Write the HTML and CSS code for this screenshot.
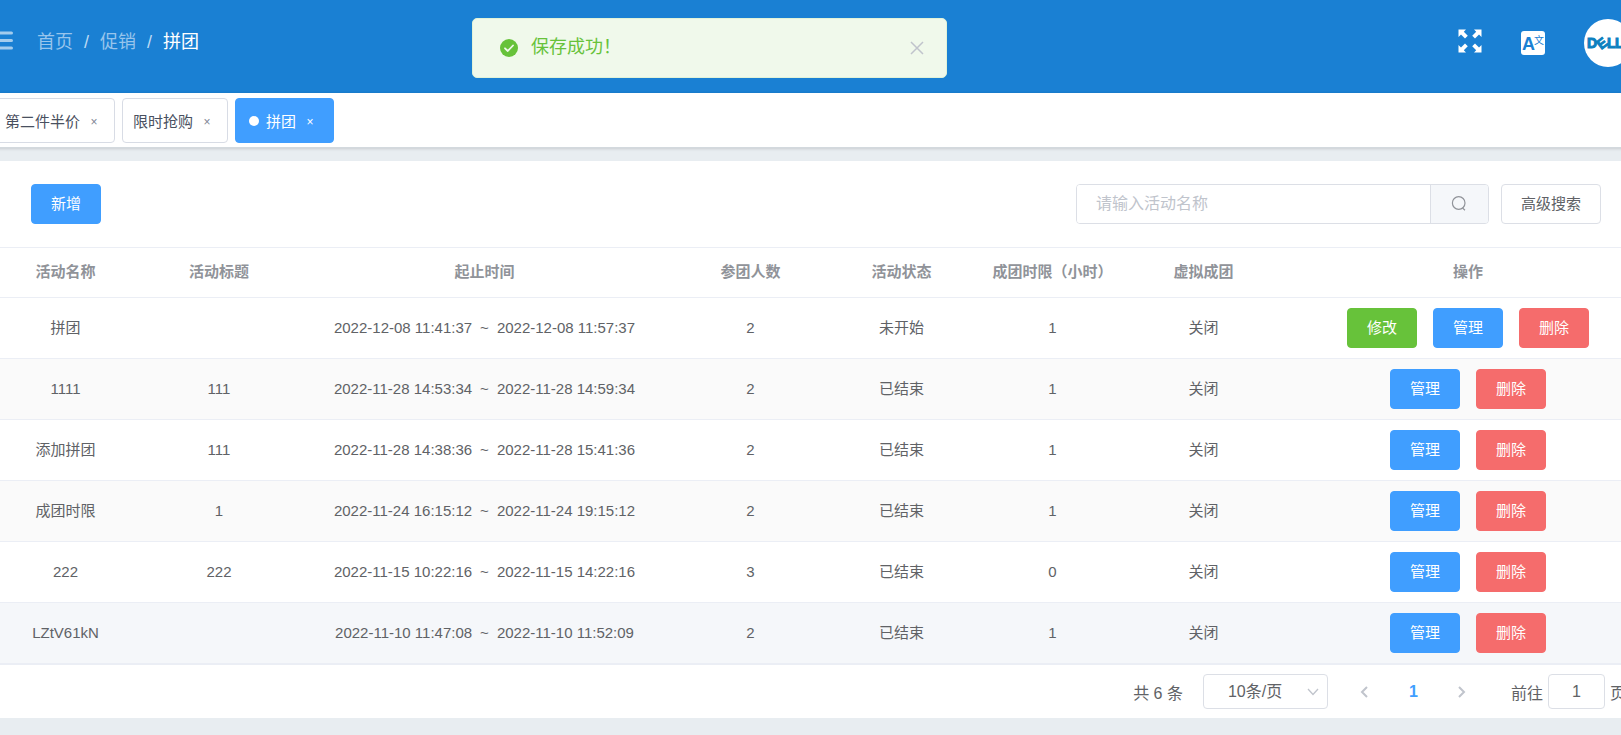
FILE: index.html
```html
<!DOCTYPE html>
<html lang="zh-CN">
<head>
    <meta charset="UTF-8">
    <meta name="viewport" content="width=device-width, initial-scale=1.0">
    <title>拼团</title>
    <link rel="stylesheet" href="styles.css">
</head>
<body>

    <div class="app">
        <!-- Header -->
        <header class="header">
            <button class="menu-btn" type="button" aria-label="菜单">
                <svg width="22" height="20" viewBox="0 0 22 20" stroke="currentColor" stroke-width="3" stroke-linecap="round">
                    <path d="M1.5 2h19M1.5 9.5h19M1.5 17h19"/>
                </svg>
            </button>
            <nav class="breadcrumb">
                <a href="#">首页</a>
                <span class="sep">/</span>
                <a href="#">促销</a>
                <span class="sep">/</span>
                <span class="current">拼团</span>
            </nav>
            <div class="header-right">
                <button class="icon-btn" type="button" aria-label="全屏">
                    <svg width="24" height="28" viewBox="0 0 24 28" fill="currentColor">
                        <path id="arrow" d="M0.500 0.500H8L5.800 2.800L9.800 6.800L7 9.600L3 5.600L0.500 8Z"/>
                        <use href="#arrow" transform="matrix(-1 0 0 1 24 0)"/>
                        <use href="#arrow" transform="matrix(1 0 0 -1 0 24)"/>
                        <use href="#arrow" transform="matrix(-1 0 0 -1 24 24)"/>
                    </svg>
                </button>
                <button class="icon-btn" type="button" aria-label="语言">
                    <svg width="24" height="24" viewBox="0 0 24 24">
                        <rect width="24" height="24" rx="3" fill="#fff"/>
                        <text class="lang-a" x="1" y="19">A</text>
                        <text class="lang-zh" x="13" y="13">文</text>
                    </svg>
                </button>
                <a class="avatar" href="#" aria-label="用户">
                    <svg width="48" height="48" viewBox="0 0 48 48">
                        <circle cx="24" cy="24" r="24" fill="#fff"/>
                        <g class="logo-text">
                            <text x="3" y="29">D</text>
                            <text x="13" y="29" transform="rotate(-38 18 24)">E</text>
                            <text x="23" y="29">L</text>
                            <text x="31" y="29">L</text>
                        </g>
                    </svg>
                </a>
            </div>
        </header>

        <!-- Opened pages -->
        <nav class="tags">
            <div class="tag"><a href="#">第二件半价</a><button type="button" aria-label="关闭第二件半价">×</button></div>
            <div class="tag"><a href="#">限时抢购</a><button type="button" aria-label="关闭限时抢购">×</button></div>
            <div class="tag active"><a href="#">拼团</a><button type="button" aria-label="关闭拼团">×</button></div>
        </nav>

        <!-- Success Message -->
        <div class="message" role="alert">
            <svg width="18" height="18" viewBox="0 0 18 18" fill="none">
                <circle cx="9" cy="9" r="9" fill="#67c23a"/>
                <path d="M5 9.300l2.800 2.700 5.200-5.500" stroke="#f0f9eb" stroke-width="1.800" stroke-linecap="round" stroke-linejoin="round"/>
            </svg>
            <p>保存成功！</p>
            <button type="button" aria-label="关闭">
                <svg width="14" height="14" viewBox="0 0 14 14" stroke="currentColor" stroke-width="1.500">
                    <path d="M1 1l12 12M13 1L1 13"/>
                </svg>
            </button>
        </div>

        <main class="card">
            <!-- Toolbar -->
            <div class="toolbar">
                <button class="btn primary" type="button">新增</button>
                <form class="search">
                    <input type="text" placeholder="请输入活动名称" aria-label="活动名称">
                    <button type="button" aria-label="搜索">
                        <svg width="16" height="16" viewBox="0 0 16 16" fill="none" stroke="currentColor" stroke-width="1.200">
                            <circle cx="7.700" cy="7" r="6.300"/>
                            <path d="M11.500 12l2.500 2.300"/>
                        </svg>
                    </button>
                </form>
                <button class="btn" type="button">高级搜索</button>
            </div>

            <!-- Activity list -->
            <table>
                <colgroup>
                    <col class="col-name">
                    <col class="col-title">
                    <col class="col-time">
                    <col class="col-small">
                    <col class="col-small">
                    <col class="col-small">
                    <col class="col-small">
                    <col class="col-action">
                </colgroup>
                <thead>
                    <tr>
                        <th>活动名称</th>
                        <th>活动标题</th>
                        <th>起止时间</th>
                        <th>参团人数</th>
                        <th>活动状态</th>
                        <th>成团时限（小时）</th>
                        <th>虚拟成团</th>
                        <th>操作</th>
                    </tr>
                </thead>
                <tbody>
                    <tr>
                        <td>拼团</td>
                        <td></td>
                        <td>2022-12-08 11:41:37<span class="to">~</span>2022-12-08 11:57:37</td>
                        <td>2</td>
                        <td>未开始</td>
                        <td>1</td>
                        <td>关闭</td>
                        <td>
                            <div class="actions">
                                <button class="btn success" type="button">修改</button>
                                <button class="btn primary" type="button">管理</button>
                                <button class="btn danger" type="button">删除</button>
                            </div>
                        </td>
                    </tr>
                    <tr>
                        <td>1111</td>
                        <td>111</td>
                        <td>2022-11-28 14:53:34<span class="to">~</span>2022-11-28 14:59:34</td>
                        <td>2</td>
                        <td>已结束</td>
                        <td>1</td>
                        <td>关闭</td>
                        <td>
                            <div class="actions">
                                <button class="btn primary" type="button">管理</button>
                                <button class="btn danger" type="button">删除</button>
                            </div>
                        </td>
                    </tr>
                    <tr>
                        <td>添加拼团</td>
                        <td>111</td>
                        <td>2022-11-28 14:38:36<span class="to">~</span>2022-11-28 15:41:36</td>
                        <td>2</td>
                        <td>已结束</td>
                        <td>1</td>
                        <td>关闭</td>
                        <td>
                            <div class="actions">
                                <button class="btn primary" type="button">管理</button>
                                <button class="btn danger" type="button">删除</button>
                            </div>
                        </td>
                    </tr>
                    <tr>
                        <td>成团时限</td>
                        <td>1</td>
                        <td>2022-11-24 16:15:12<span class="to">~</span>2022-11-24 19:15:12</td>
                        <td>2</td>
                        <td>已结束</td>
                        <td>1</td>
                        <td>关闭</td>
                        <td>
                            <div class="actions">
                                <button class="btn primary" type="button">管理</button>
                                <button class="btn danger" type="button">删除</button>
                            </div>
                        </td>
                    </tr>
                    <tr>
                        <td>222</td>
                        <td>222</td>
                        <td>2022-11-15 10:22:16<span class="to">~</span>2022-11-15 14:22:16</td>
                        <td>3</td>
                        <td>已结束</td>
                        <td>0</td>
                        <td>关闭</td>
                        <td>
                            <div class="actions">
                                <button class="btn primary" type="button">管理</button>
                                <button class="btn danger" type="button">删除</button>
                            </div>
                        </td>
                    </tr>
                    <tr class="hover">
                        <td>LZtV61kN</td>
                        <td></td>
                        <td>2022-11-10 11:47:08<span class="to">~</span>2022-11-10 11:52:09</td>
                        <td>2</td>
                        <td>已结束</td>
                        <td>1</td>
                        <td>关闭</td>
                        <td>
                            <div class="actions">
                                <button class="btn primary" type="button">管理</button>
                                <button class="btn danger" type="button">删除</button>
                            </div>
                        </td>
                    </tr>
                </tbody>
            </table>

            <!-- Pagination -->
            <div class="pagination">
                <span>共 6 条</span>
                <div class="page-size">
                    <select aria-label="每页条数">
                        <option>10条/页</option>
                        <option>20条/页</option>
                        <option>50条/页</option>
                    </select>
                    <svg width="12" height="8" viewBox="0 0 12 8" fill="none" stroke="#c0c4cc" stroke-width="1.300">
                        <path d="M1 1l5 5.500L11 1"/>
                    </svg>
                </div>
                <div class="pager">
                    <button type="button" aria-label="上一页">
                        <svg width="8" height="12" viewBox="0 0 8 12" fill="none" stroke="#c0c4cc" stroke-width="2">
                            <path d="M7 1L2 6l5 5"/>
                        </svg>
                    </button>
                    <button class="current" type="button">1</button>
                    <button type="button" aria-label="下一页">
                        <svg width="8" height="12" viewBox="0 0 8 12" fill="none" stroke="#c0c4cc" stroke-width="2">
                            <path d="M1 1l5 5-5 5"/>
                        </svg>
                    </button>
                </div>
                <div class="jump">
                    <label for="page">前往</label>
                    <input type="text" id="page" value="1">
                    <span>页</span>
                </div>
            </div>
        </main>
    </div>

</body>
</html>
```
FILE: styles.css
```css
* {
    box-sizing: border-box;
}
body {
    margin: 0;
    font-family: "Liberation Sans", "Noto Sans CJK SC", sans-serif;
    font-size: 15px;
    color: #606266;
    background-color: #e8edf1;
    overflow: hidden;
}
button, input, select {
    font-family: inherit;
    font-size: inherit;
    color: inherit;
}
button {
    padding: 0;
    border: none;
    background: none;
    cursor: pointer;
}
a {
    color: inherit;
    text-decoration: none;
}
svg {
    display: block;
}
/* The content area runs a little past both window edges */
.app {
    position: relative;
    margin: 0 -36px 0 -13px;
}
/* Header */
.header {
    display: flex;
    align-items: center;
    height: 93px;
    padding: 0 25px 7px 4px;
    background-color: #1a80d3;
    color: white;
}
.menu-btn {
    padding-bottom: 4px;
    color: #a3cced;
}
.breadcrumb {
    display: flex;
    align-items: center;
    gap: 11px;
    margin-left: 24px;
    padding-bottom: 2px;
    font-size: 18px;
    line-height: 24px;
}
.breadcrumb a {
    color: #98c5ec;
}
.breadcrumb .sep {
    color: #bcdaf3;
}
.header-right {
    display: flex;
    align-items: center;
    gap: 39px;
    margin-left: auto;
}
.icon-btn {
    color: white;
}
.lang-a {
    font-size: 18px;
    font-weight: bold;
    fill: #1a80d3;
}
.lang-zh {
    font-size: 10px;
    fill: #1a80d3;
}
.logo-text {
    font-size: 14px;
    font-weight: bold;
    fill: #0c80bf;
    stroke: #0c80bf;
}
/* Tags */
.tags {
    display: flex;
    gap: 7px;
    padding: 5px 7px 4px;
    background-color: white;
    border-bottom: 1px solid #d3d9de;
    box-shadow: 0 1px 3px rgba(0, 0, 0, 0.12), 0 0 3px rgba(0, 0, 0, 0.04);
}
.tag {
    display: flex;
    align-items: center;
    gap: 4px;
    height: 45px;
    padding: 0 10px;
    border: 1px solid #d8dce5;
    border-radius: 4px;
    color: #495060;
}
.tag button {
    width: 20px;
    font-size: 12px;
    line-height: 20px;
    padding-top: 3px;
    color: #808695;
}
.tag.active {
    padding: 0 13px;
    background-color: #409eff;
    border-color: #409eff;
    color: white;
}
.tag.active::before {
    content: "";
    width: 10px;
    height: 10px;
    margin-right: 3px;
    border-radius: 50%;
    background-color: white;
}
.tag.active button {
    color: white;
}
/* Message */
.message {
    position: absolute;
    top: 18px;
    left: 485px;
    display: flex;
    align-items: center;
    width: 475px;
    height: 60px;
    padding: 0 22px 0 27px;
    background-color: #f0f9eb;
    border: 1px solid #e1f3d8;
    border-radius: 5px;
    color: #67c23a;
}
.message p {
    margin: 0 auto 0 13px;
    padding-bottom: 2px;
    font-size: 18px;
    line-height: 24px;
}
.message button {
    color: #c0c4cc;
}
/* Card */
.card {
    margin-top: 13px;
    background-color: white;
}
.toolbar {
    display: flex;
    align-items: center;
    padding: 23px 56px 23px 44px;
}
.btn {
    height: 40px;
    padding: 0 19px 3px;
    border: 1px solid #dcdfe6;
    border-radius: 4px;
    background-color: white;
}
.btn.primary {
    background-color: #409eff;
    border-color: #409eff;
    color: white;
}
.btn.success {
    background-color: #67c23a;
    border-color: #67c23a;
    color: white;
}
.btn.danger {
    background-color: #f56c6c;
    border-color: #f56c6c;
    color: white;
}
.search {
    display: flex;
    width: 413px;
    height: 40px;
    margin: 0 12px 0 auto;
    border: 1px solid #dcdfe6;
    border-radius: 4px;
    overflow: hidden;
}
.search input {
    flex: 1;
    min-width: 0;
    padding: 0 19px;
    border: none;
    font-size: 16px;
}
.search input::placeholder {
    color: #c0c4cc;
}
.search button {
    display: flex;
    align-items: center;
    justify-content: center;
    width: 58px;
    border-left: 1px solid #dcdfe6;
    background-color: #f5f7fa;
    color: #909399;
}
/* Table */
table {
    width: 100%;
    table-layout: fixed;
    border-collapse: separate;
    border-spacing: 0;
    border-top: 1px solid #ebeef5;
    border-bottom: 1px solid #ebeef5;
}
.col-name {
    width: 157px;
}
.col-title {
    width: 150px;
}
.col-small {
    width: 151px;
}
.col-action {
    width: 378px;
}
th, td {
    padding: 10px 0;
    text-align: center;
    line-height: 24px;
    white-space: nowrap;
    border-bottom: 1px solid #ebeef5;
}
th {
    padding: 12px 0 13px;
    font-weight: bold;
    color: #909399;
}
tbody tr:nth-child(even) {
    background-color: #fafafa;
}
tbody tr.hover {
    background-color: #f5f7fa;
}
.to {
    margin: 0 8px;
}
.actions {
    display: flex;
    justify-content: center;
    gap: 16px;
}
/* Pagination */
.pagination {
    display: flex;
    align-items: center;
    justify-content: flex-end;
    padding: 9px 31px 9px;
    font-size: 16px;
}
.page-size {
    position: relative;
    margin-left: 20px;
}
.page-size select {
    width: 125px;
    height: 35px;
    padding: 0 24px;
    border: 1px solid #dcdfe6;
    border-radius: 4px;
    background-color: white;
    appearance: none;
}
.page-size svg {
    position: absolute;
    top: 14px;
    right: 9px;
    pointer-events: none;
}
.pager {
    display: flex;
    margin-left: 12px;
}
.pager button {
    display: flex;
    align-items: center;
    justify-content: center;
    width: 49px;
    height: 35px;
}
.pager .current {
    font-weight: bold;
    color: #409eff;
}
.jump {
    display: flex;
    align-items: center;
    gap: 5px;
    margin-left: 24px;
}
.jump input {
    width: 57px;
    height: 35px;
    border: 1px solid #dcdfe6;
    border-radius: 4px;
    text-align: center;
}
```
